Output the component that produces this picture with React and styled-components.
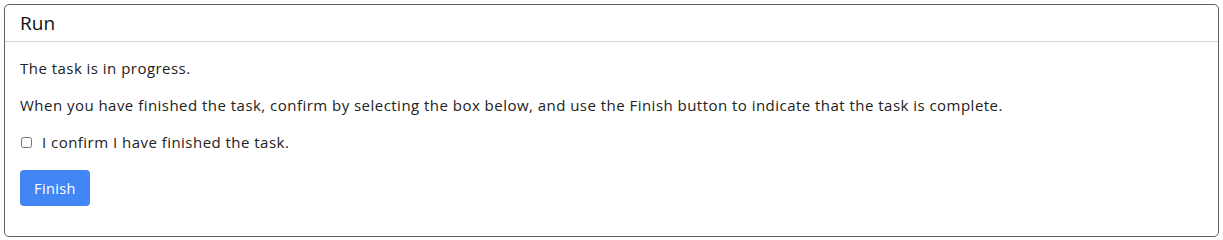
import React, { useState } from "react";
import styled, { createGlobalStyle } from "styled-components";

const GlobalStyle = createGlobalStyle`
  body {
    margin: 4px;
    background: #fff;
    font-family: "Open Sans", "Noto Sans", sans-serif;
    color: #212529;
  }
  * { box-sizing: border-box; }
`;

const Card = styled.section`
  border: 1px solid #5f5f5f;
  border-radius: 5px;
  background: #fff;
  height: 233px;
`;

const CardHeader = styled.header`
  height: 37px;
  padding: 0 15px;
  display: flex;
  align-items: center;
  border-bottom: 1px solid #d6d6d6;
  font-size: 19px;
  color: #111;
`;

const CardBody = styled.div`
  padding: 16px 15px;
`;

const Text = styled.p`
  margin: 0 0 16px;
  font-size: 15px;
  line-height: 21px;
  letter-spacing: 0.47px;
  color: #222;
`;

const CheckRow = styled.label`
  display: flex;
  align-items: center;
  gap: 10px;
  margin-bottom: 17px;
  font-size: 15px;
  line-height: 21px;
  letter-spacing: 0.47px;
  color: #222;
`;

const Check = styled.input`
  width: 11px;
  height: 11px;
  margin: 0 0 0 1px;
`;

const Button = styled.button`
  height: 36px;
  padding: 0 14px;
  border: none;
  border-radius: 4px;
  background: #4285f4;
  color: #fff;
  font-family: inherit;
  font-size: 14.5px;
  letter-spacing: 0.4px;
  cursor: pointer;
`;

export default function App() {
  const [done, setDone] = useState(false);
  return (
    <>
      <GlobalStyle />
      <Card>
        <CardHeader>Run</CardHeader>
        <CardBody>
          <Text>The task is in progress.</Text>
          <Text>
            When you have finished the task, confirm by selecting the box below, and use the
            Finish button to indicate that the task is complete.
          </Text>
          <CheckRow>
            <Check type="checkbox" checked={done} onChange={(e) => setDone(e.target.checked)} />
            I confirm I have finished the task.
          </CheckRow>
          <Button type="button">Finish</Button>
        </CardBody>
      </Card>
    </>
  );
}
